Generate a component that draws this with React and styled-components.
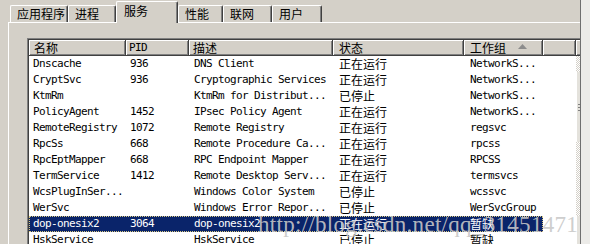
import React from "react"
import styled, { createGlobalStyle } from "styled-components"

const GlobalStyle = createGlobalStyle`
  html, body {
    margin: 0;
    padding: 0;
    background: #d4d0c8;
    overflow: hidden;
  }
`

const ASCII = `"DejaVu Sans Mono", "Liberation Mono", monospace`
const CJK = `"Noto Sans CJK SC", "Noto Sans", sans-serif`

const Screen = styled.div`
  display: flex;
  width: 590px;
  height: 244px;
  position: relative;
  overflow: hidden;
`

const Main = styled.div`
  display: flex;
  flex-direction: column;
  width: 580px;
  overflow: hidden;
`

const SideStrip = styled.div`
  width: 9px;
  border-left: 1px solid #6f6f6f;
  background: #ecebe8;
`

const TabStrip = styled.div`
  display: flex;
  align-items: flex-end;
  height: 22px;
  padding-left: 10px;
`

const Tab = styled.div`
  box-sizing: border-box;
  width: ${({ $w }) => $w}px;
  height: ${({ $active }) => ($active ? 22 : 17)}px;
  margin-bottom: ${({ $active }) => ($active ? -1 : 0)}px;
  padding: ${({ $active }) => ($active ? "1px 0 0 7px" : "0 0 0 6px")};
  position: relative;
  z-index: ${({ $active }) => ($active ? 2 : 1)};
  background: #d4d0c8;
  border-top: 1px solid #fff;
  border-left: 1px solid #fff;
  border-right: 1px solid #404040;
  border-radius: 2px 2px 0 0;
  box-shadow: inset -1px 0 #808080;
  font: 12px/15px ${CJK};
  color: #000;
  white-space: nowrap;
`

const Panel = styled.div`
  flex: 1;
  margin-left: 8px;
  border-top: 1px solid #fff;
  border-left: 1px solid #fff;
  padding: 15px 0 0 18px;
  overflow: hidden;
  display: flex;
`

const List = styled.div`
  width: 565px;
  flex-shrink: 0;
  background: #fff;
  border-top: 1px solid #808080;
  border-left: 1px solid #808080;
  box-shadow: inset 1px 1px #404040;
  padding: 1px 0 0 1px;
  display: flex;
  flex-direction: column;
`

const HeaderRow = styled.div`
  display: grid;
  grid-template-columns: 97px 63px 144px 131px 79px 33px 1fr;
  height: 16px;
`

const HeaderCell = styled.div`
  box-sizing: border-box;
  display: flex;
  align-items: center;
  background: #d4d0c8;
  border-right: 1px solid #404040;
  border-bottom: 1px solid #404040;
  box-shadow: inset 1px 1px #fff, inset -1px -1px #808080;
  padding-left: ${({ $pad }) => $pad ?? 5}px;
  font: ${({ $ascii }) => ($ascii ? `11px/15px ${ASCII}` : `12px/15px ${CJK}`)};
  letter-spacing: ${({ $ascii }) => ($ascii ? "-0.6px" : "0")};
  color: #000;
  white-space: nowrap;
  overflow: hidden;
`

const SortArrow = styled.svg`
  flex-shrink: 0;
  margin-left: 12px;
  margin-bottom: 2px;
`

const Body = styled.div`
  flex: 1;
  display: flex;
`

const Rows = styled.div`
  width: 547px;
  display: flex;
  flex-direction: column;
`

const Row = styled.div`
  display: flex;
  height: 16px;
`

const Item = styled.div`
  box-sizing: border-box;
  display: grid;
  grid-template-columns: 97px 63px 144px 131px 79px;
  background: ${({ $selected }) => ($selected ? "#0a246a" : "transparent")};
  color: ${({ $selected }) => ($selected ? "#fff" : "#000")};
  outline: ${({ $selected }) => ($selected ? "1px dotted #d8c880" : "none")};
  outline-offset: -1px;
`

const Cell = styled.div`
  padding-left: ${({ $pad }) => $pad ?? 5}px;
  font: ${({ $cjk }) => ($cjk ? `12px/16px ${CJK}` : `11px/16px ${ASCII}`)};
  letter-spacing: ${({ $cjk }) => ($cjk ? "0" : "-0.62px")};
  white-space: nowrap;
  overflow: hidden;
`

const Scrollbar = styled.div`
  width: 16px;
  display: flex;
  flex-direction: column;
`

const Track = styled.div`
  height: ${({ $h }) => $h}px;
  background: repeating-conic-gradient(#fff 0 25%, #d4d0c8 0 50%) 0 0 / 2px 2px;
`

const Thumb = styled.div`
  box-sizing: border-box;
  height: ${({ $h }) => $h}px;
  background: #e4e2dc;
  border-left: 1px solid #fff;
  display: flex;
  align-items: center;
  padding-left: 1px;
`

const Grip = styled.div`
  width: 6px;
  height: 7px;
  background: repeating-linear-gradient(#808080 0 1px, transparent 1px 3px);
`

const Watermark = styled.div`
  position: absolute;
  left: 258px;
  top: 213px;
  font: 23px/23px "Liberation Serif", serif;
  letter-spacing: 0.3px;
  color: rgba(200, 200, 200, 0.9);
  white-space: nowrap;
  pointer-events: none;
`

const tabs = [
  { label: "应用程序", w: 58 },
  { label: "进程", w: 48 },
  { label: "服务", w: 62, active: true },
  { label: "性能", w: 45 },
  { label: "联网", w: 49 },
  { label: "用户", w: 50 },
]

const services = [
  ["Dnscache", "936", "DNS Client", "正在运行", "NetworkS..."],
  ["CryptSvc", "936", "Cryptographic Services", "正在运行", "NetworkS..."],
  ["KtmRm", "", "KtmRm for Distribut...", "已停止", "NetworkS..."],
  ["PolicyAgent", "1452", "IPsec Policy Agent", "正在运行", "NetworkS..."],
  ["RemoteRegistry", "1072", "Remote Registry", "正在运行", "regsvc"],
  ["RpcSs", "668", "Remote Procedure Ca...", "正在运行", "rpcss"],
  ["RpcEptMapper", "668", "RPC Endpoint Mapper", "正在运行", "RPCSS"],
  ["TermService", "1412", "Remote Desktop Serv...", "正在运行", "termsvcs"],
  ["WcsPlugInSer...", "", "Windows Color System", "已停止", "wcssvc"],
  ["WerSvc", "", "Windows Error Repor...", "已停止", "WerSvcGroup"],
  ["dop-onesix2", "3064", "dop-onesix2", "正在运行", "暂缺", true],
  ["HskService", "", "HskService", "已停止", "暂缺"],
]

const isCjk = text => /[\u4e00-\u9fff]/.test(text)

function ServiceRow({ service }) {
  const [name, pid, desc, status, group, selected] = service
  return (
    <Row>
      <Item $selected={selected}>
        <Cell $pad={4}>{name}</Cell>
        <Cell $pad={4}>{pid}</Cell>
        <Cell>{desc}</Cell>
        <Cell $cjk $pad={6}>{status}</Cell>
        <Cell $cjk={isCjk(group)} $pad={6}>{group}</Cell>
      </Item>
    </Row>
  )
}

export default function App() {
  return (
    <Screen>
      <GlobalStyle />
      <Main>
        <TabStrip>
          {tabs.map(tab => (
            <Tab key={tab.label} $w={tab.w} $active={tab.active}>
              {tab.label}
            </Tab>
          ))}
        </TabStrip>
        <Panel>
          <List>
            <HeaderRow>
              <HeaderCell $pad={5}>名称</HeaderCell>
              <HeaderCell $ascii $pad={3}>PID</HeaderCell>
              <HeaderCell $pad={4}>描述</HeaderCell>
              <HeaderCell $pad={6}>状态</HeaderCell>
              <HeaderCell $pad={6}>
                <span>工作组</span>
                <SortArrow width="9" height="5" viewBox="0 0 9 5">
                  <polygon points="4.5,0 9,5 0,5" fill="#8c8c8c" />
                </SortArrow>
              </HeaderCell>
              <HeaderCell />
              <HeaderCell />
            </HeaderRow>
            <Body>
              <Rows>
                {services.map(service => (
                  <ServiceRow key={service[0]} service={service} />
                ))}
              </Rows>
              <Scrollbar>
                <Track $h={16} />
                <Thumb $h={70}>
                  <Grip />
                </Thumb>
                <Track $h={74} />
                <Thumb $h={40} />
              </Scrollbar>
            </Body>
          </List>
        </Panel>
      </Main>
      <SideStrip />
      <Watermark>http://blog.csdn.net/qq_31451471</Watermark>
    </Screen>
  )
}
